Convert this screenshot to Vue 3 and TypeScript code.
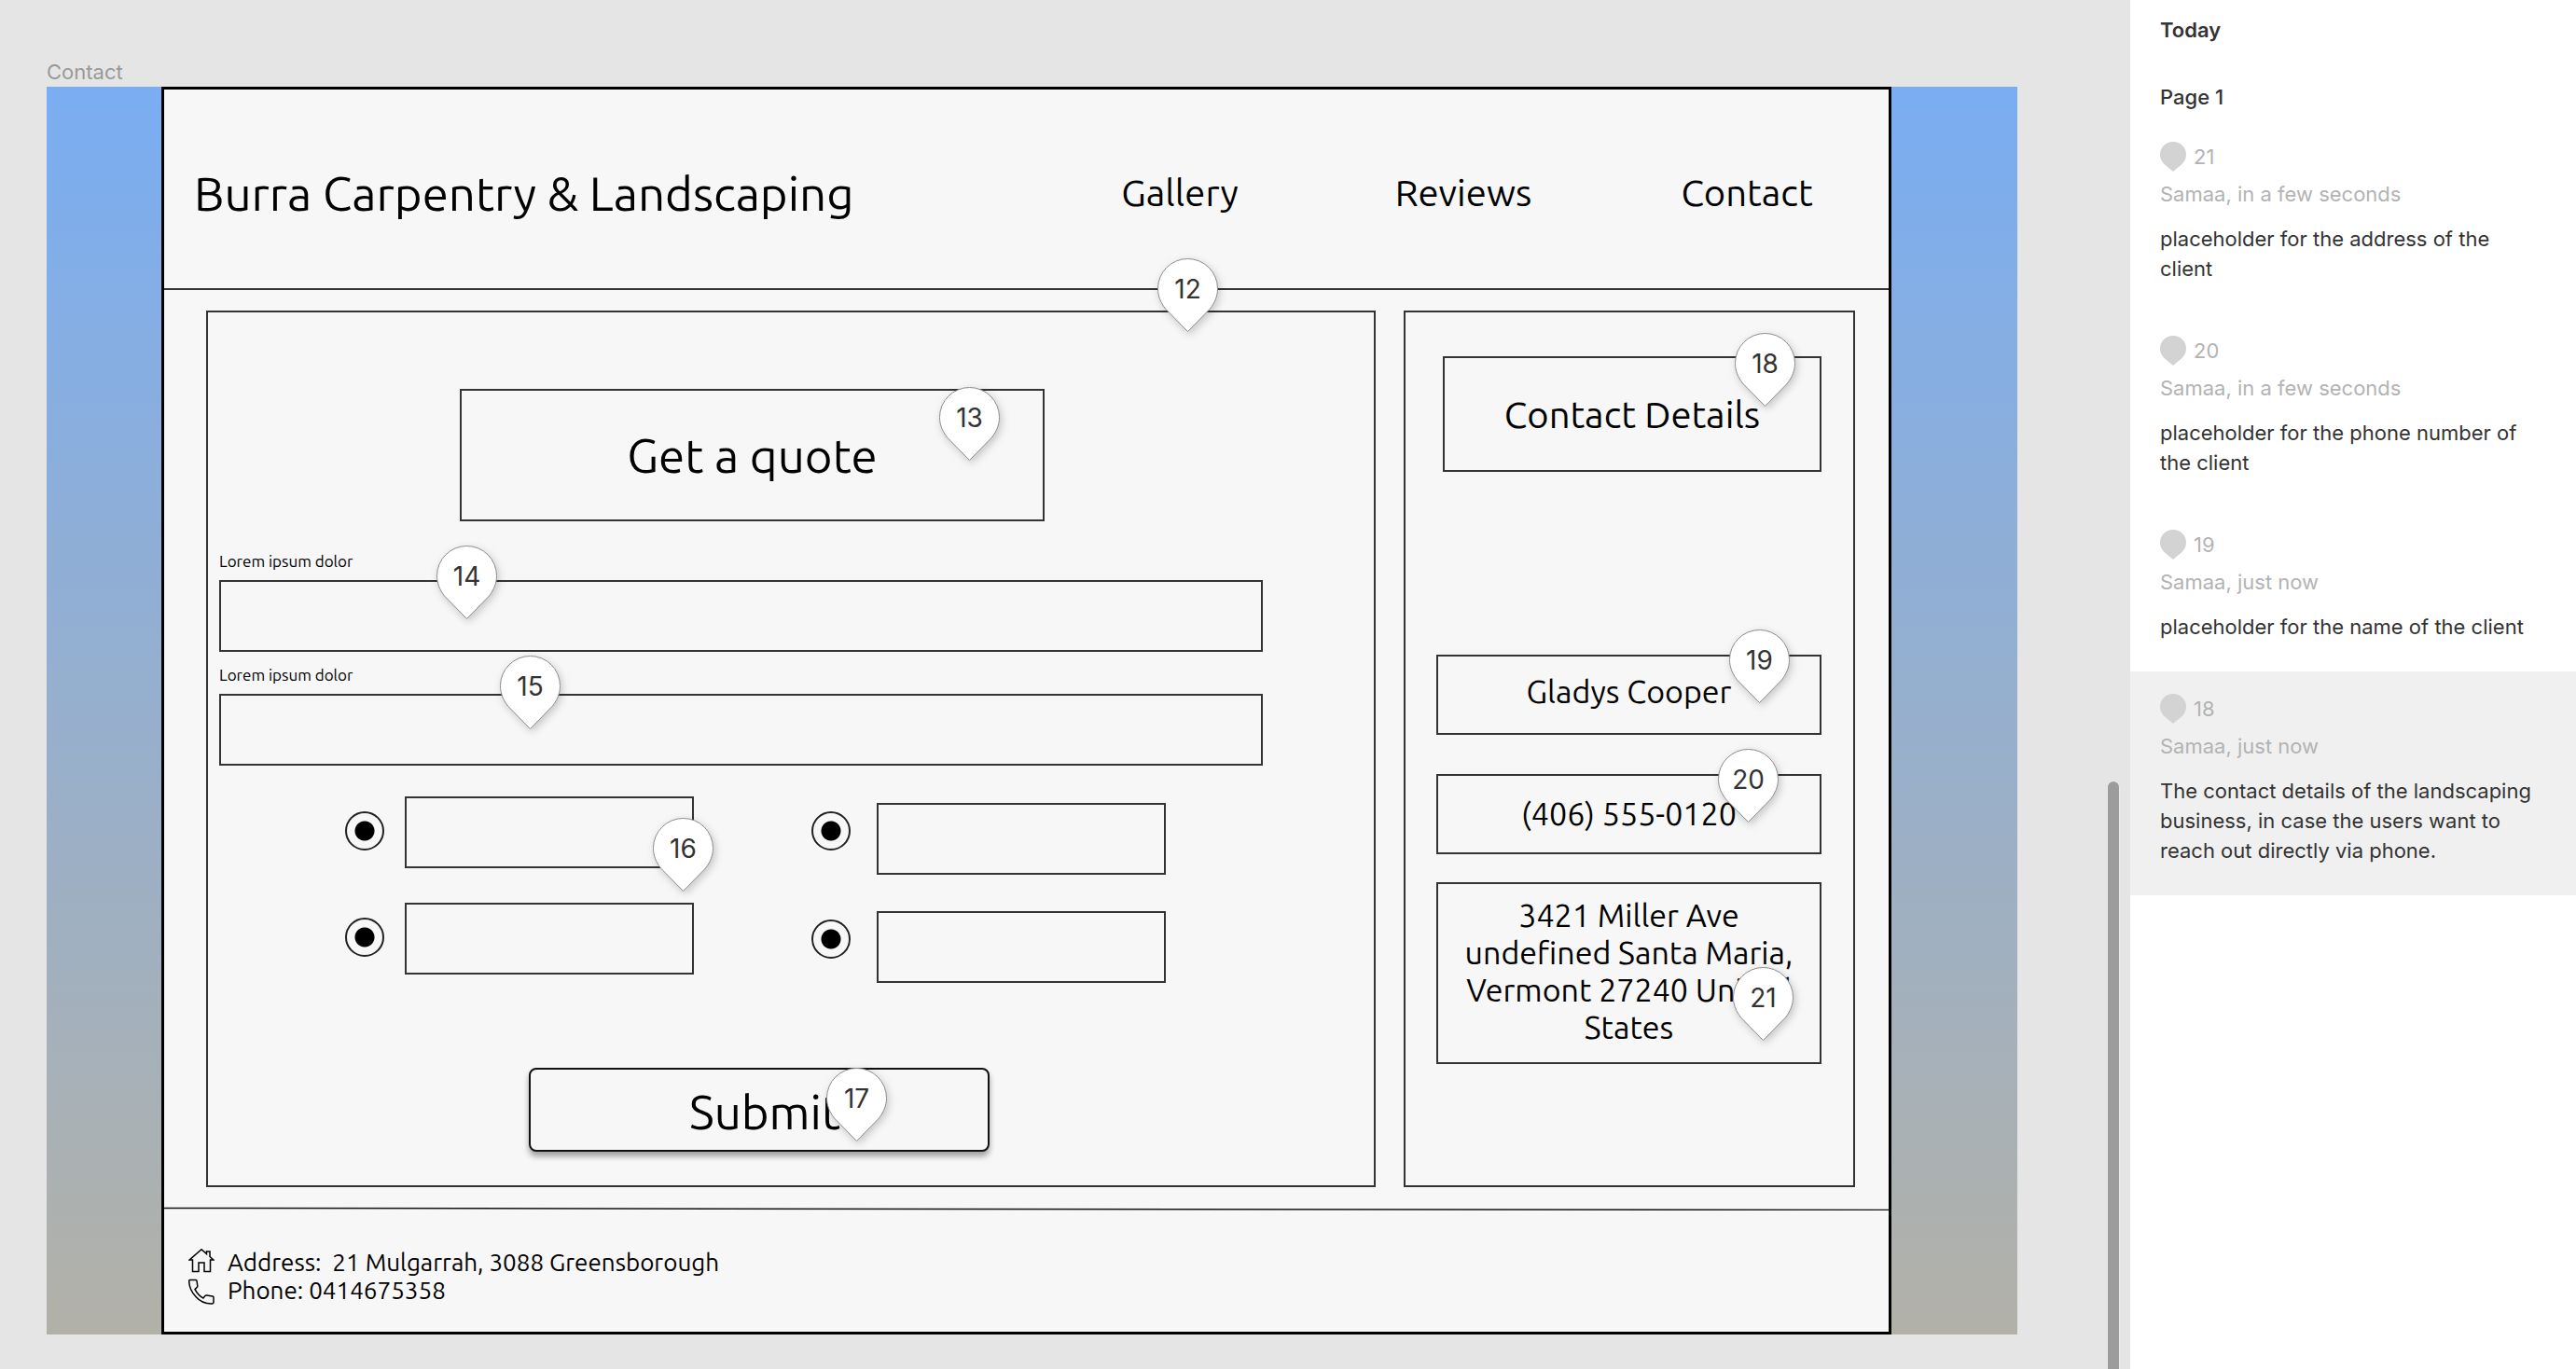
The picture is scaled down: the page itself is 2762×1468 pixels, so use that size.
<script setup lang="ts">
interface Pin {
  id: number
  x: number
  y: number
}

interface Comment {
  id: number
  meta: string
  text: string
  active?: boolean
}

const FRAME_WIDTH = 1849

// x is the pin's centre and y its top, both measured inside the frame
const pins: Pin[] = [
  { id: 12, x: 1098, y: 180 },
  { id: 13, x: 864, y: 318 },
  { id: 14, x: 325, y: 488 },
  { id: 15, x: 393, y: 606 },
  { id: 16, x: 557, y: 780 },
  { id: 17, x: 743, y: 1048 },
  { id: 18, x: 1717, y: 260 },
  { id: 19, x: 1711, y: 578 },
  { id: 20, x: 1699, y: 706 },
  { id: 21, x: 1715, y: 940 },
]

const comments: Comment[] = [
  { id: 21, meta: 'Samaa, in a few seconds', text: 'placeholder for the address of the client' },
  { id: 20, meta: 'Samaa, in a few seconds', text: 'placeholder for the phone number of the client' },
  { id: 19, meta: 'Samaa, just now', text: 'placeholder for the name of the client' },
  {
    id: 18,
    meta: 'Samaa, just now',
    text: 'The contact details of the landscaping business, in case the users want to reach out directly via phone.',
    active: true,
  },
]

const fields = ['first', 'second']
const optionColumns = [
  { name: 'left', options: [1, 2] },
  { name: 'right', options: [3, 4] },
]

const pinStyle = (pin: Pin) => ({
  left: `${(pin.x / FRAME_WIDTH) * 100}%`,
  top: `${pin.y}px`,
})
</script>

<template>
  <div class="app">
    <main class="canvas">
      <div class="artboard-name">Contact</div>
      <div class="artboard">
        <div class="frame">
          <header class="header">
            <h1 class="title">Burra Carpentry &amp; Landscaping</h1>
            <nav class="nav">
              <a href="#gallery">Gallery</a>
              <a href="#reviews">Reviews</a>
              <a href="#contact">Contact</a>
            </nav>
          </header>

          <div class="content">
            <form class="panel quote" @submit.prevent>
              <h2 class="box quote-title">Get a quote</h2>
              <div class="fields">
                <div v-for="field in fields" :key="field" class="field">
                  <label :for="`field-${field}`">Lorem ipsum dolor</label>
                  <input :id="`field-${field}`" class="box" type="text" />
                </div>
              </div>
              <div class="options">
                <div v-for="column in optionColumns" :key="column.name" class="column" :class="column.name">
                  <div v-for="option in column.options" :key="option" class="option">
                    <input
                      class="radio"
                      type="radio"
                      :name="`option-${option}`"
                      :aria-label="`Option ${option}`"
                      checked
                    />
                    <input class="box" type="text" :aria-label="`Option ${option} details`" />
                  </div>
                </div>
              </div>
              <button class="submit" type="submit">Submit</button>
            </form>

            <section class="panel details">
              <h2 class="box details-title">Contact Details</h2>
              <div class="box name">Gladys Cooper</div>
              <div class="box phone">(406) 555-0120</div>
              <address class="box address">
                3421 Miller Ave undefined Santa Maria, Vermont 27240 United States
              </address>
            </section>
          </div>

          <svg class="rule" viewBox="0 0 100 4" preserveAspectRatio="none" aria-hidden="true">
            <line x1="0" y1="1.5" x2="100" y2="3.5" stroke="#111" stroke-width="1.5" />
          </svg>

          <footer class="footer">
            <div class="footer-row">
              <svg width="28" height="30" viewBox="0 0 28 30" fill="none" stroke="#000" stroke-width="1.5">
                <path d="M1 12.1 14 .8l5.5 4.700V3h3.500v5.500L27 12.100h-3.500V24.500h-6.500v-9.500h-6v9.500H4.500V12.100H1Z" />
              </svg>
              <span>Address:&nbsp; 21 Mulgarrah, 3088 Greensborough</span>
            </div>
            <div class="footer-row">
              <svg width="28" height="30" viewBox="0 0 28 30" fill="none" stroke="#000" stroke-width="1.5" stroke-linejoin="round">
                <path d="M1.500 3.500h6.500q1 0 1 1l.8 5.500q0 1-.7 1.500L7 13.600q3.500 6.500 9 9.400l2-2.600q.5-.6 1.500-.5l6.500 1q1 .2 1 1.200v5.400q0 1.400-1.400 1.500Q15 29.500 8 21.500.8 14 .7 4.700q0-1 .8-1.200Z" />
              </svg>
              <span>Phone: 0414675358</span>
            </div>
          </footer>

          <button
            v-for="pin in pins"
            :key="pin.id"
            class="pin"
            type="button"
            :style="pinStyle(pin)"
          >
            <svg width="67" height="81" viewBox="-1 -1 67 81" aria-hidden="true">
              <path
                d="M32.500 .5a32 32 0 0 1 32 32c0 8-3 15-8 21.500L32.500 78.500 8.500 54c-5-6.500-8-13.500-8-21.500a32 32 0 0 1 32-32Z"
                fill="#fff"
                stroke="#8c8c8c"
              />
            </svg>
            <span>{{ pin.id }}</span>
          </button>
        </div>
      </div>
      <div class="scrollbar"></div>
    </main>

    <aside class="sidebar">
      <h2 class="day">Today</h2>
      <h3 class="page">Page 1</h3>
      <article
        v-for="comment in comments"
        :key="comment.id"
        class="comment"
        :class="{ active: comment.active }"
      >
        <div class="number">
          <svg width="28" height="32" viewBox="0 0 28 32" aria-hidden="true">
            <path d="M14 0a14 14 0 0 1 14 14c0 4-2 8-5 10.500L14 32l-9-7.500C2 22 0 18 0 14A14 14 0 0 1 14 0Z" fill="#d3d3d3" />
          </svg>
          <span>{{ comment.id }}</span>
        </div>
        <div class="meta">{{ comment.meta }}</div>
        <p class="text">{{ comment.text }}</p>
      </article>
    </aside>
  </div>
</template>

<style>
body {
  margin: 0;
  background: #e5e5e5;
}
</style>

<style scoped>
* {
  box-sizing: border-box;
}

h1,
h2,
h3,
p {
  margin: 0;
  font-weight: 400;
}

.app {
  display: flex;
  min-height: 100vh;
  background: #e5e5e5;
  font-family: Inter, sans-serif;
  font-size: 22px;
  line-height: 32px;
}

.canvas {
  position: relative;
  flex: 1;
  min-width: 0;
  padding: 61px 121px 37px 50px;
}

.artboard-name {
  color: #999;
}

.artboard {
  padding: 0 135px 0 123px;
  background: linear-gradient(#7aadf2, #b2b1a8);
}

.frame {
  position: relative;
  border: 3px solid #000;
  background: #f7f7f7;
  color: #000;
  font-family: Ubuntu, "Noto Sans", sans-serif;
}

.header {
  display: flex;
  justify-content: space-between;
  align-items: center;
  height: 215px;
  padding: 8px 0 0 32px;
  border-bottom: 2px solid #333;
}

.title {
  font-size: 51px;
  line-height: 64px;
  white-space: nowrap;
}

.nav {
  display: grid;
  grid-template-columns: repeat(3, 304px);
  text-align: center;
  font-size: 40px;
  line-height: 48px;
}

.nav a {
  color: inherit;
  text-decoration: none;
}

.content {
  display: flex;
  gap: 30px;
  padding: 22px 36px 21px 45px;
}

.panel,
.box {
  border: 2px solid #333;
}

.box {
  border-radius: 0;
  background: transparent;
}

.quote {
  flex: 1;
  min-width: 0;
  padding: 82px 12px 36px;
}

.quote-title {
  width: 627px;
  margin-left: 258px;
  padding: 37px 0;
  text-align: center;
  font-size: 51px;
  line-height: 64px;
}

.fields {
  display: grid;
  gap: 15px;
  margin: 33px 107px 33px 0;
}

.field {
  display: grid;
  gap: 10px;
}

.field label {
  font-size: 17px;
  line-height: 20px;
}

.field .box,
.option .box {
  width: 100%;
  height: 77px;
  padding: 0 16px;
  font: inherit;
}

.options {
  display: flex;
  gap: 126px;
  margin-left: 135px;
}

.column {
  display: grid;
  align-content: start;
  gap: 37px;
}

.right {
  gap: 39px;
  padding-top: 7px;
}

.option {
  display: flex;
  gap: 22px;
}

.right .option {
  gap: 28px;
}

.option .box {
  width: 310px;
}

.radio {
  flex: none;
  width: 42px;
  height: 42px;
  margin: 16px 0 0;
  appearance: none;
  border: 2px solid #222;
  border-radius: 50%;
  background: radial-gradient(circle, #000 10px, transparent 11px);
}

.right .radio {
  margin-top: 9px;
}

.submit {
  display: block;
  width: 494px;
  height: 90px;
  margin: 91px 0 0 332px;
  padding: 4px 0 0 12px;
  border: 2px solid #111;
  border-radius: 8px;
  background: #f7f7f7;
  box-shadow: 0 5px 6px rgba(0, 0, 0, 0.35);
  color: #000;
  font-family: inherit;
  font-size: 51px;
  line-height: 64px;
}

.details {
  flex: none;
  width: 484px;
  padding: 47px 34px 0 33px;
  text-align: center;
}

.details-title {
  margin: 0 0 196px 7px;
  padding: 37px 0 35px;
  font-size: 40px;
  line-height: 48px;
}

.name,
.phone {
  font-size: 34px;
  line-height: 40px;
}

.name {
  margin-bottom: 42px;
  padding: 17px 0 25px;
}

.phone {
  margin-bottom: 30px;
  padding: 20px 0 22px;
}

.address {
  padding: 13px 20px 18px;
  font-size: 34px;
  font-style: normal;
  line-height: 40px;
}

.rule {
  display: block;
  width: 100%;
  height: 4px;
}

.footer {
  padding: 41px 0 29px 26px;
  font-size: 26px;
  line-height: 30px;
}

.footer-row {
  display: flex;
  gap: 14px;
}

.pin {
  position: absolute;
  width: 67px;
  height: 81px;
  margin-left: -34px;
  padding: 0;
  border: 0;
  background: none;
  color: #333;
  font-family: Inter, sans-serif;
  font-size: 28px;
  line-height: 32px;
  text-align: center;
}

.pin svg {
  position: absolute;
  inset: 0;
  filter: drop-shadow(2px 3px 4px rgba(0, 0, 0, 0.2));
}

.pin span {
  position: absolute;
  inset: 18px 0 auto;
}

.scrollbar {
  position: absolute;
  top: 837px;
  right: 11px;
  bottom: 0;
  width: 14px;
  border: 1px solid #ececec;
  border-bottom: 0;
  border-radius: 7px 7px 0 0;
  background: #9c9c9c;
}

.sidebar {
  flex: none;
  width: 478px;
  padding-top: 16px;
  background: #fff;
  color: #333;
}

.day,
.page {
  padding-left: 32px;
  font-size: 22px;
}

.day {
  margin-bottom: 40px;
  font-weight: 600;
}

.page {
  margin-bottom: 8px;
  font-weight: 500;
}

.comment {
  padding: 24px 32px 32px;
}

.active {
  background: #f0f0f0;
}

.number {
  display: flex;
  gap: 8px;
  margin-bottom: 8px;
  color: #b3b3b3;
}

.meta {
  margin-bottom: 16px;
  color: #b3b3b3;
}
</style>
